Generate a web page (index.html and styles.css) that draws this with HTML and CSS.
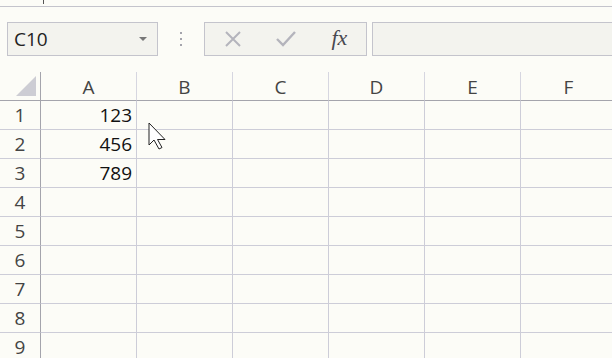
FILE: index.html
```html
<html>
<head>
  <title>Sheet</title>
  <link rel="stylesheet" href="styles.css">
</head>
<body>
<div class="ribbon"><span class="tick"></span></div>
<div class="toolbar">
  <div class="namebox">
    <span>C10</span>
    <span class="arrow"></span>
  </div>
  <div class="grip"><i></i><i></i><i></i></div>
  <div class="buttons">
    <span class="btn">
      <svg width="18" height="18" viewBox="0 0 18 18"><path d="M2 2 L16 16 M16 2 L2 16" stroke="#b4b4bc" stroke-width="2" fill="none"/></svg>
    </span>
    <span class="btn">
      <svg width="20" height="18" viewBox="0 0 20 18"><path d="M1 9 L7 15 L19 2" stroke="#b4b4bc" stroke-width="2.4" fill="none"/></svg>
    </span>
    <span class="btn fx">fx</span>
  </div>
  <div class="formula"></div>
</div>
<div class="sheet">
  <div class="corner"><span class="tri"></span></div>
  <div class="colhead">A</div>
  <div class="colhead">B</div>
  <div class="colhead">C</div>
  <div class="colhead">D</div>
  <div class="colhead">E</div>
  <div class="colhead">F</div>
</div>
<div class="rows"></div>
<svg class="pointer" width="20" height="28" viewBox="0 0 20 28">
  <path d="M1 1 L1 23 L6 18 L11 27 L14 25.5 L9.5 17.5 L17 17.5 Z" fill="#fff" stroke="#222" stroke-width="1"/>
</svg>
<script type="text/javascript">
  var data = {1: '123', 2: '456', 3: '789'};
  var rows = document.querySelector('.rows');
  for (var r = 1; r <= 9; r++) {
    var row = document.createElement('div');
    row.className = 'sheet row';
    var h = document.createElement('div');
    h.className = 'rowhead';
    h.textContent = r;
    row.appendChild(h);
    for (var c = 0; c < 6; c++) {
      var cell = document.createElement('div');
      cell.className = 'cell';
      if (c === 0 && data[r]) cell.textContent = data[r];
      row.appendChild(cell);
    }
    rows.appendChild(row);
  }
</script>
</body>
</html>
```
FILE: styles.css
```css
body {
  margin: 0;
  background-color: #fcfcf7;
  font-family: "Open Sans", sans-serif;
  color: #444;
  width: 612px;
  height: 358px;
  overflow: hidden;
  position: relative;
}
.ribbon {
  height: 6px;
  border-bottom: 1px solid #c4c4cc;
  position: relative;
}
.ribbon .tick {
  position: absolute;
  left: 43px;
  top: 0;
  width: 1px;
  height: 4px;
  background: #555;
}
.toolbar {
  display: flex;
  margin-top: 15px;
  padding-left: 7px;
  height: 34px;
}
.namebox {
  box-sizing: border-box;
  width: 151px;
  height: 34px;
  border: 1px solid #c4c4cc;
  background: #f3f3ee;
  display: flex;
  align-items: center;
  justify-content: space-between;
  padding: 0 10px 0 6px;
  font-size: 19px;
  color: #222;
}
.namebox .arrow {
  width: 0;
  height: 0;
  border-left: 4px solid transparent;
  border-right: 4px solid transparent;
  border-top: 4px solid #777;
}
.grip {
  width: 46px;
  display: flex;
  flex-direction: column;
  align-items: center;
  justify-content: center;
  gap: 4px;
}
.grip i {
  width: 2px;
  height: 2px;
  background: #a4a4ac;
}
.buttons {
  box-sizing: border-box;
  width: 163px;
  height: 34px;
  border: 1px solid #c4c4cc;
  background: #f3f3ee;
  display: flex;
  align-items: center;
}
.buttons .btn {
  width: 54px;
  display: flex;
  justify-content: center;
  align-items: center;
}
.buttons .btn:first-child {
  margin-left: 1px;
}
.buttons .fx {
  font-family: "Liberation Serif", serif;
  font-style: italic;
  font-size: 22px;
  color: #484850;
  margin-top: -3px;
}
.formula {
  flex: 1;
  margin-left: 5px;
  height: 34px;
  box-sizing: border-box;
  border: 1px solid #c4c4cc;
  border-right: none;
  background: #f3f3ee;
}
.sheet {
  display: grid;
  grid-template-columns: 41px repeat(6, 96px);
  margin-top: 16px;
}
.sheet.row {
  margin-top: 0;
}
.corner, .colhead {
  box-sizing: border-box;
  height: 29px;
  border-bottom: 1px solid #a4a4ac;
}
.corner {
  border-right: 1px solid #a4a4ac;
  position: relative;
}
.corner .tri {
  position: absolute;
  left: 16px;
  top: 4px;
  width: 0;
  height: 0;
  border-left: 20px solid transparent;
  border-bottom: 20px solid #cdcdd4;
}
.colhead {
  border-right: 1px solid #d6d6e0;
  text-align: center;
  font-size: 19px;
  line-height: 30px;
  color: #444;
}
.rowhead, .cell {
  box-sizing: border-box;
  height: 29px;
  border-bottom: 1px solid #cdcdd8;
  font-size: 19px;
  line-height: 29px;
}
.rowhead {
  border-right: 1px solid #a4a4ac;
  text-align: center;
  color: #444;
}
.cell {
  border-right: 1px solid #cdcdd8;
  text-align: right;
  padding-right: 4px;
  color: #111;
}
.pointer {
  position: absolute;
  left: 148px;
  top: 122px;
}
```
